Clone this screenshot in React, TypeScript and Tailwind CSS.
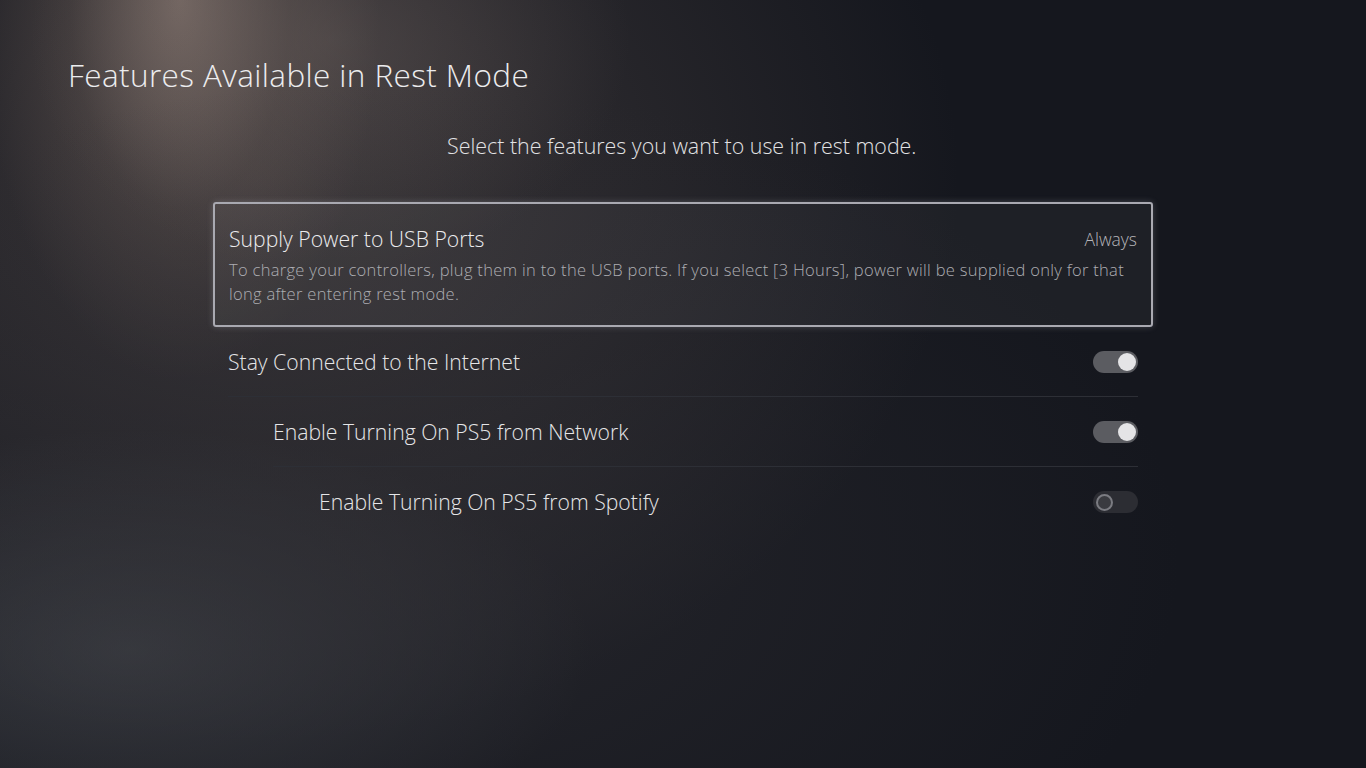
function Toggle({ on }: { on: boolean }) {
  return on ? (
    <div className="flex h-[22px] w-[45px] items-center justify-end rounded-full bg-[#5b5c61] pr-[2px]">
      <div className="h-[18px] w-[18px] rounded-full bg-[#e4e4e6]" />
    </div>
  ) : (
    <div className="flex h-[22px] w-[45px] items-center rounded-full bg-[#2c2d33] pl-[3px]">
      <div className="h-[17px] w-[17px] rounded-full border-2 border-[#7b7c82] bg-[#3a3b40]" />
    </div>
  );
}

type Row = { label: string; indent: string; on: boolean; divider: boolean };

const rows: Row[] = [
  { label: "Stay Connected to the Internet", indent: "pl-0", on: true, divider: true },
  { label: "Enable Turning On PS5 from Network", indent: "pl-[45px]", on: true, divider: true },
  { label: "Enable Turning On PS5 from Spotify", indent: "pl-[91px]", on: false, divider: false },
];

export default function App() {
  return (
    <div
      className="relative h-[768px] w-[1366px] overflow-hidden bg-[#15171e] text-[#e8e8ea]"
      style={{ fontFamily: '"Open Sans", "Noto Sans", sans-serif' }}
    >
      <div className="absolute inset-0 bg-[radial-gradient(ellipse_700px_560px_at_260px_180px,rgba(90,80,78,0.55),transparent_100%)]" />
      <div className="absolute inset-0 bg-[radial-gradient(ellipse_200px_380px_at_180px_0px,rgba(160,140,130,0.6),rgba(110,96,90,0.3)_55%,transparent_100%)]" />
      <div className="absolute inset-0 bg-[radial-gradient(ellipse_300px_230px_at_330px_40px,rgba(120,108,104,0.35),transparent_100%)]" />
      <div className="absolute inset-0 bg-[radial-gradient(ellipse_460px_220px_at_130px_650px,rgba(80,84,90,0.6),transparent_100%)]" />
      <div className="absolute inset-0 bg-[radial-gradient(ellipse_800px_480px_at_380px_560px,rgba(48,47,52,0.6),transparent_100%)]" />

      <div className="relative flex flex-col">
        <h1 className="pl-[68px] pt-[52px] text-[31.5px] font-light leading-[46px] tracking-[0.4px] text-[#ececee]">
          Features Available in Rest Mode
        </h1>
        <p className="mt-[34px] pl-[447px] text-[21.4px] font-light leading-[28px] text-[#e2e2e4]">
          Select the features you want to use in rest mode.
        </p>

        <div className="mx-[213px] mt-[42px] flex flex-col">
          <div className="flex h-[125px] flex-col rounded-[3px] border-2 border-[#a9a9b1] bg-[rgba(255,255,255,0.04)] px-[14px] pt-[20px] shadow-[0_0_6px_rgba(200,200,210,0.25)]">
            <div className="flex items-center justify-between">
              <span className="text-[21.2px] font-light leading-[30px] text-[#ececee]">
                Supply Power to USB Ports
              </span>
              <span className="text-[17.5px] font-light text-[#b6b6ba]">Always</span>
            </div>
            <p className="mt-[4px] text-[16.5px] font-light leading-[24px] tracking-[0.3px] text-[#adadb2]">
              To charge your controllers, plug them in to the USB ports. If you select [3 Hours], power will be supplied only for that long after entering rest mode.
            </p>
          </div>

          <div className="flex flex-col px-[15px]">
            {rows.map((r) => (
              <div key={r.label} className={r.indent}>
                <div
                  className={`flex h-[70px] items-center justify-between ${
                    r.divider ? "border-b border-[#2d2f36]" : ""
                  }`}
                >
                  <span className="text-[21.2px] font-light text-[#e6e6e8]">{r.label}</span>
                  <Toggle on={r.on} />
                </div>
              </div>
            ))}
          </div>
        </div>
      </div>
    </div>
  );
}
